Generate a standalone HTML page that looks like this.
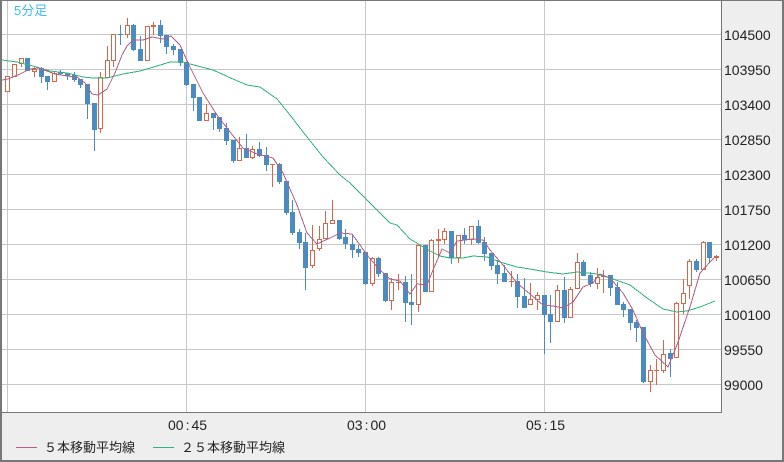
<!DOCTYPE html>
<html lang="ja"><head><meta charset="utf-8"><title>5分足</title>
<style>
html,body{margin:0;padding:0;width:784px;height:462px;overflow:hidden;background:#eee}
svg{position:absolute;left:0;top:0;display:block}
text{font-family:"Liberation Sans",sans-serif;font-size:14px;fill:#222}
text.j{font-family:"WenQuanYi Zen Hei","Liberation Sans","Noto Sans CJK JP",sans-serif;font-size:13px}
</style></head><body>
<svg width="784" height="462" viewBox="0 0 784 462" xmlns="http://www.w3.org/2000/svg">
<rect width="784" height="462" fill="#eee"/>
<rect x="2" y="1" width="720" height="411" fill="#fff"/>
<g shape-rendering="crispEdges">
<path fill="none" stroke="#c8c8c8" stroke-width="1" d="M2 34.5H721M2 69.5H721M2 104.5H721M2 139.5H721M2 174.5H721M2 209.5H721M2 244.5H721M2 279.5H721M2 314.5H721M2 349.5H721M2 384.5H721M7.5 1V412M186.5 1V412M365.5 1V412M544.5 1V412"/>
<!-- blue wicks -->
<path fill="none" stroke="#4b8bbf" stroke-width="1" d="M41.5 67V83M47.5 76V90M60.5 70V75M67.5 73V80M74.5 72V82M80.5 79V88M87.5 84V119M94.5 103V151M120.5 25V45M133.5 24V51M140.5 36V61M160.5 20V43M166.5 35V54M173.5 44V55M180.5 49V66M186.5 62V86M193.5 84V111M213.5 113V130M219.5 117V132M226.5 123V145M233.5 140V163M246.5 134V158M259.5 142V157M266.5 147V171M279.5 163V184M286.5 181V215M292.5 200V235M299.5 229V249M305.5 233V290M339.5 220V240M345.5 229V249M352.5 234V258M358.5 245V257M365.5 252V285M378.5 257V277M385.5 273V302M405.5 276V322M411.5 274V325M451.5 231V264M464.5 228V244M478.5 220V244M484.5 237V261M491.5 253V270M497.5 260V284M504.5 265V282M517.5 274V308M524.5 278V308M544.5 295V354M550.5 295V343M564.5 277V323M583.5 260V276M590.5 272V287M610.5 275V296M617.5 282V305M623.5 302V317M630.5 309V330M636.5 320V342M643.5 327V383M670.5 349V377M696.5 259V272M709.5 242V262"/>
<!-- blue bodies -->
<path fill="#4b8bbf" d="M25 58h5V71h-5zM39 68h5V77h-5zM45 76h5V82h-5zM58 72h5V74h-5zM65 73h5V76h-5zM72 75h5V80h-5zM78 79h5V85h-5zM85 84h5V104h-5zM92 103h5V130h-5zM118 34h5V35h-5zM131 25h5V50h-5zM138 49h5V61h-5zM158 25h5V36h-5zM164 35h5V47h-5zM171 46h5V50h-5zM178 49h5V63h-5zM184 62h5V85h-5zM191 84h5V98h-5zM197 97h5V121h-5zM211 113h5V118h-5zM217 117h5V129h-5zM224 128h5V141h-5zM231 140h5V161h-5zM244 148h5V158h-5zM257 149h5V156h-5zM264 155h5V165h-5zM277 164h5V182h-5zM284 181h5V213h-5zM290 212h5V233h-5zM297 232h5V243h-5zM303 242h5V268h-5zM337 220h5V239h-5zM343 237h5V244h-5zM350 244h5V250h-5zM356 249h5V253h-5zM363 252h5V284h-5zM376 258h5V274h-5zM383 273h5V301h-5zM403 282h5V303h-5zM409 302h5V305h-5zM423 245h5V292h-5zM449 231h5V258h-5zM462 235h5V240h-5zM476 226h5V243h-5zM482 242h5V254h-5zM489 253h5V266h-5zM495 265h5V274h-5zM502 273h5V282h-5zM515 281h5V297h-5zM522 296h5V308h-5zM542 295h5V315h-5zM548 314h5V322h-5zM562 290h5V318h-5zM581 262h5V276h-5zM588 275h5V284h-5zM608 275h5V288h-5zM615 287h5V305h-5zM621 304h5V310h-5zM628 309h5V323h-5zM634 322h5V328h-5zM641 327h5V382h-5zM668 353h5V359h-5zM694 261h5V270h-5zM707 242h5V258h-5z"/>
<!-- red wicks and flat bodies -->
<path fill="none" stroke="#d2674c" stroke-width="1" d="M21.5 58V67M34.5 67V77M54.5 72V82M100.5 72V133M107.5 46V78M113.5 34V67M127.5 18V38M153.5 22V35M206.5 104V121M239.5 137V161M252.5 146V159M272.5 164V187M312.5 225V268M319.5 226V251M325.5 211V239M332.5 200V224M372.5 257V286M391.5 278V310M398.5 274V290M418.5 245V312M431.5 239V292M438.5 229V258M444.5 228V244M458.5 235V263M471.5 226V245M511.5 271V287M530.5 283V305M537.5 292V310M557.5 285V322M570.5 287V318M577.5 253V289M597.5 268V289M603.5 270V293M650.5 365V392M656.5 359V385M663.5 340V373M676.5 302V358M683.5 279V314M689.5 259V299M703.5 241V270M716.5 255V261M151 25.5h5M151 26.5h5M270 164.5h5M396 282.5h5M436 239.5h5M436 240.5h5M509 281.5h5M601 276.5h5M654 370.5h5M714 256.5h5M714 257.5h5"/>
<!-- red bodies -->
<path fill="#fff" stroke="#d2674c" stroke-width="1" d="M5.5 76.5h4V91.5h-4zM12.5 64.5h4V76.5h-4zM19.5 58.5h4V63.5h-4zM32.5 69.5h4V71.5h-4zM52.5 73.5h4V81.5h-4zM98.5 77.5h4V128.5h-4zM105.5 60.5h4V77.5h-4zM111.5 34.5h4V60.5h-4zM125.5 25.5h4V34.5h-4zM145.5 26.5h4V60.5h-4zM204.5 113.5h4V120.5h-4zM237.5 148.5h4V160.5h-4zM250.5 149.5h4V157.5h-4zM310.5 250.5h4V265.5h-4zM317.5 239.5h4V248.5h-4zM323.5 223.5h4V238.5h-4zM330.5 220.5h4V223.5h-4zM370.5 258.5h4V283.5h-4zM389.5 282.5h4V300.5h-4zM416.5 245.5h4V304.5h-4zM429.5 240.5h4V291.5h-4zM442.5 231.5h4V239.5h-4zM456.5 235.5h4V257.5h-4zM469.5 226.5h4V239.5h-4zM528.5 299.5h4V304.5h-4zM535.5 295.5h4V299.5h-4zM555.5 290.5h4V321.5h-4zM568.5 289.5h4V317.5h-4zM575.5 262.5h4V288.5h-4zM595.5 277.5h4V283.5h-4zM648.5 370.5h4V381.5h-4zM661.5 354.5h4V370.5h-4zM674.5 303.5h4V357.5h-4zM681.5 293.5h4V303.5h-4zM687.5 261.5h4V285.5h-4zM701.5 242.5h4V269.5h-4z"/>
<!-- MA25 -->
<polyline fill="none" stroke="#2fb57c" stroke-width="1" points="2,60 17,62 33,66 50,71 67,73 83,77 93,78 107,78 123,74 140,71 157,66 170,62 183,62 190,64 213,70 233,79 247,85 260,87 277,99 290,115 307,137 323,157 340,175 350,183 367,200 390,223 397,225 410,239 420,245 430,251 440,256 450,258 463,258 473,256 487,257 500,262 517,267 530,269 547,272 563,274 577,272 597,274 613,279 630,285 647,298 663,309 677,312 687,311 700,307 715,301"/>
<!-- MA5 -->
<polyline fill="none" stroke="#b0608a" stroke-width="1" points="2,80 8,79 20,74 30,69 38,68 47,71 55,74 67,76 77,77 85,83 92,94 98,95 107,89 115,73 122,55 127,46 133,40 143,40 152,37 163,39 171,36 180,45 188,63 203,93 217,115 230,132 243,148 257,154 273,158 283,173 297,205 307,233 317,244 330,238 340,233 352,234 360,245 367,255 380,270 390,279 400,281 410,294 417,284 427,285 433,270 442,249 450,253 457,241 473,239 483,240 490,250 503,265 517,283 530,294 543,305 553,306 563,308 573,302 583,287 593,283 600,274 610,278 623,293 633,310 643,333 655,355 668,367 677,345 690,307 700,273 710,262 715,257"/>
<!-- frame -->
<g fill="#777">
<rect x="0" y="0" width="784" height="1"/>
<rect x="0" y="0" width="2" height="462"/>
<rect x="782" y="0" width="2" height="462"/>
<rect x="0" y="460" width="784" height="2"/>
<rect x="721" y="0" width="1" height="413"/>
<rect x="0" y="412" width="722" height="1"/>
<rect x="16" y="447" width="21" height="1" fill="#b0608a"/>
<rect x="153" y="447" width="21" height="1" fill="#2fb57c"/>
</g>
</g>
<text class="j" x="14" y="15" style="fill:#3cbdf0">5分足</text>
<g>
<text x="724" y="40">104500</text>
<text x="724" y="75">103950</text>
<text x="724" y="110">103400</text>
<text x="724" y="145">102850</text>
<text x="724" y="180">102300</text>
<text x="724" y="215">101750</text>
<text x="724" y="250">101200</text>
<text x="724" y="285">100650</text>
<text x="724" y="320">100100</text>
<text x="724" y="355">99550</text>
<text x="724" y="390">99000</text>
<text x="168" y="430">00<tspan dx="2">:</tspan><tspan dx="2">45</tspan></text>
<text x="347" y="430">03<tspan dx="2">:</tspan><tspan dx="2">00</tspan></text>
<text x="526" y="430">05<tspan dx="2">:</tspan><tspan dx="2">15</tspan></text>
<text class="j" x="44" y="452">５本移動平均線</text>
<text class="j" x="181" y="452">２５本移動平均線</text>
</g>
</svg>
</body></html>
